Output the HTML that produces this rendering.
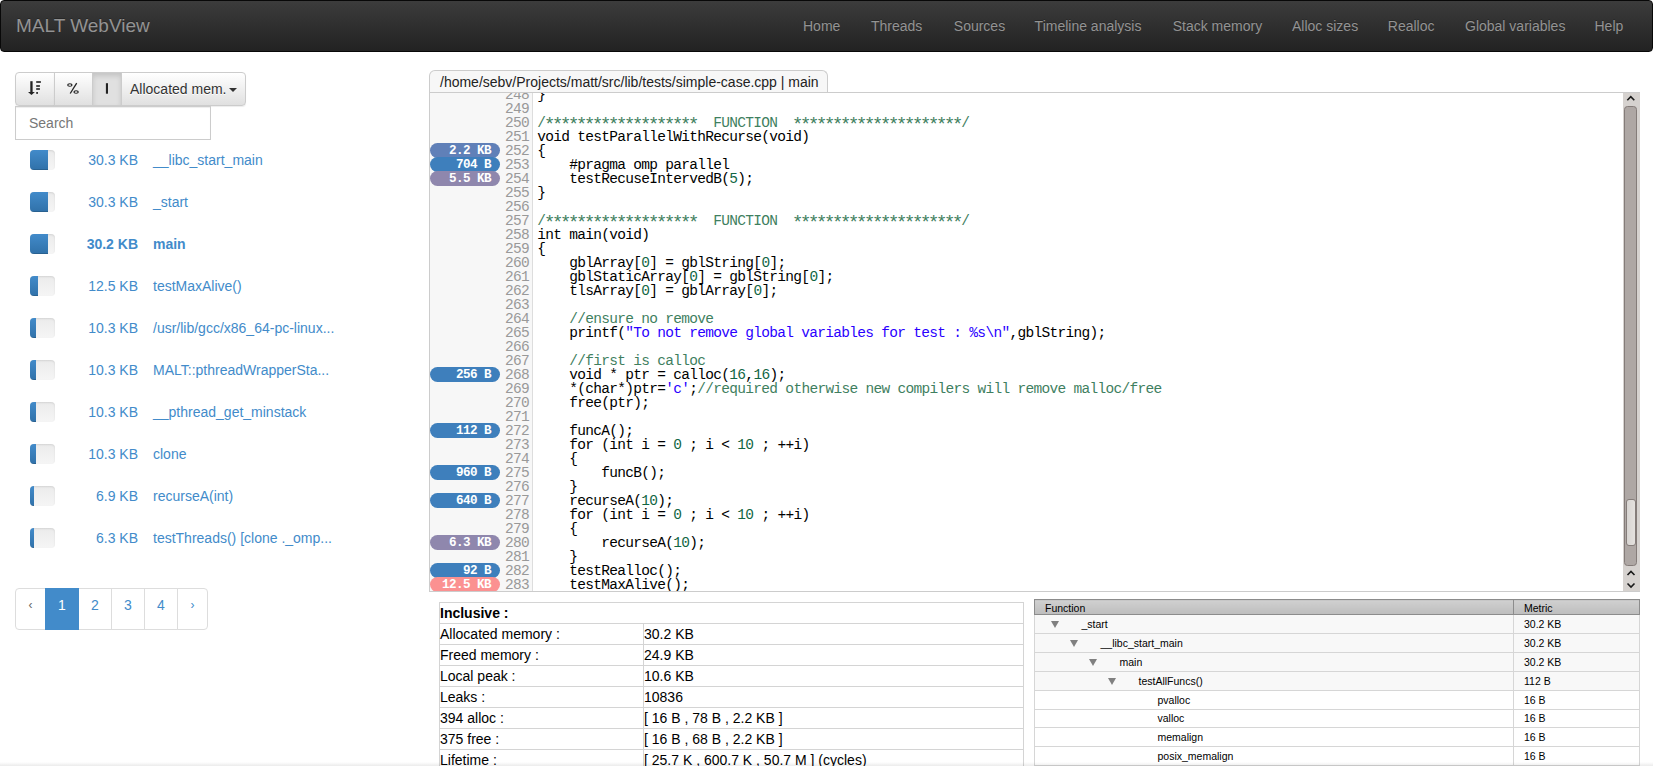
<!DOCTYPE html>
<html><head><meta charset="utf-8"><title>MALT WebView</title>
<style>
*{box-sizing:border-box;}
html,body{margin:0;padding:0;}
body{width:1653px;height:766px;overflow:hidden;position:relative;background:#fff;font-family:"Liberation Sans",sans-serif;font-size:14px;line-height:20px;color:#333;}
.abs{position:absolute;}
/* navbar */
#nav{left:0;top:0;width:1653px;height:52px;border:1px solid #080808;border-radius:4px;background:linear-gradient(to bottom,#3c3c3c 0,#222 100%);}
#brand{left:15px;top:15px;font-size:19px;line-height:20px;color:#939393;text-shadow:0 -1px 0 rgba(0,0,0,.25);white-space:nowrap;}
#links a{position:absolute;top:15px;line-height:20px;color:#939393;text-decoration:none;text-shadow:0 -1px 0 rgba(0,0,0,.25);white-space:nowrap;}
/* left */
.btn{position:absolute;top:72px;height:34px;border:1px solid #ccc;background:linear-gradient(to bottom,#fff 0,#e0e0e0 100%);color:#333;text-shadow:0 1px 0 #fff;box-shadow:inset 0 1px 0 rgba(255,255,255,.15),0 1px 1px rgba(0,0,0,.075);}

.btn{position:absolute;top:72px;height:34px;border:1px solid #ccc;background:linear-gradient(to bottom,#fff 0,#e0e0e0 100%);color:#333;box-shadow:inset 0 1px 0 rgba(255,255,255,.15),0 1px 1px rgba(0,0,0,.075);}
.btn.act{background:#e0e0e0;border-color:#ccc;box-shadow:inset 0 3px 5px rgba(0,0,0,.125);}
#search{left:15px;top:106px;width:196px;height:34px;border:1px solid #ccc;box-shadow:inset 0 1px 1px rgba(0,0,0,.075);background:#fff;}
#search span{position:absolute;left:13px;top:6px;color:#777;}
.row{position:absolute;left:0;width:400px;height:20px;}
.prog{position:absolute;left:30px;top:0;width:25px;height:20px;border-radius:4px;background:linear-gradient(to bottom,#ebebeb 0,#f5f5f5 100%);box-shadow:inset 0 1px 2px rgba(0,0,0,.1);overflow:hidden;}
.prog i{position:absolute;left:0;top:0;height:20px;background:linear-gradient(to bottom,#428bca 0,#3071a9 100%);box-shadow:inset 0 -1px 0 rgba(0,0,0,.15);}
.row .v{position:absolute;right:262px;top:0;color:#428bca;white-space:nowrap;}
.row .n{position:absolute;left:153px;top:0;color:#428bca;white-space:nowrap;}
.row.b .v,.row.b .n{font-weight:bold;}
#pag{left:15px;top:588px;height:42px;}
#pag a{position:absolute;top:0;height:42px;border:1px solid #ddd;color:#428bca;text-align:center;line-height:20px;padding-top:6px;background:#fff;}
#pag a.ar{font-size:12px;}
#pag a.dis{color:#666;}

#tab{left:429px;top:70px;width:399px;height:23px;border:1px solid #ccc;border-bottom:none;border-radius:6px 6px 0 0;background:#f7f7f7;}
#tab span{position:absolute;left:10px;top:0.5px;white-space:nowrap;color:#222;}
#ed{left:429px;top:92px;width:1211px;height:500px;border:1px solid #ccc;background:#fff;overflow:hidden;}
#gut{position:absolute;left:0;top:0;width:103px;height:498px;background:#f7f7f7;border-right:1px solid #ddd;}
#code{position:absolute;left:0;top:-5px;width:1193px;font-family:"Liberation Mono",monospace;font-size:14.5px;letter-spacing:-0.7px;line-height:14px;}
.ln{position:relative;height:14px;white-space:pre;}
.ln .num{position:absolute;left:0;width:99px;text-align:right;color:#999;}
.ln .txt{position:absolute;left:107.3px;color:#000;}
.bd{position:absolute;left:0;top:-1px;width:70px;height:15px;border-radius:7.5px;color:#fff;font-weight:bold;font-size:12.6px;letter-spacing:-0.55px;line-height:15px;padding-top:1px;text-align:right;padding-right:9px;}
.c{color:#3f7f5f;} .c i{font-style:normal;display:inline-block;width:8px;transform:translate(0.2px,1.8px) scale(1.3,1.25);} .s{color:#2a00ff;} .m{color:#116644;}


#sb{left:1623px;top:93px;width:17px;height:498px;background:#d6d2cf;}
#sb .tr{position:absolute;left:1px;top:13px;width:13px;height:460px;border-radius:3.5px;background:#aea7a4;border:1px solid #847c79;}
#sb .th{position:absolute;left:2.5px;top:406px;width:10px;height:47px;border-radius:3px;background:linear-gradient(to right,#d8d5d2,#e4e1de);border:1px solid #857d7a;}
.tbl{position:absolute;border-collapse:collapse;}
#info{left:439px;top:602px;width:585px;}
#info td{border:1px solid #d4d4d4;height:21px;padding:0;line-height:20px;color:#000;white-space:nowrap;}
#tree{left:1034px;top:599px;width:606px;font-size:10.5px;}
#tree th{height:15px;background:linear-gradient(to bottom,#d0d0d0,#bdbdbd);border:1px solid #8c8c8c;text-align:left;font-weight:normal;padding:0 0 0 10px;line-height:14px;color:#000;}
#tree th span{position:relative;top:1px;}
#tree td{height:19px;overflow:hidden;border:1px solid #d6d6d6;padding:0 0 0 10px;line-height:18px;color:#000;white-space:nowrap;}
#tree tr.p td{background:#f8f8f8;}
#tree tr.s td{height:18px;line-height:17px;}
.tri{display:inline-block;width:0;height:0;border-left:4.75px solid transparent;border-right:4.75px solid transparent;border-top:7.5px solid #808080;vertical-align:0px;margin-left:5.5px;margin-right:23px;}
#shade{left:0;top:762px;width:1653px;height:4px;background:linear-gradient(to bottom,rgba(0,0,0,0),rgba(0,0,0,.08));}
</style></head>
<body>
<div id="nav" class="abs">
  <div id="brand" class="abs">MALT WebView</div>
  <div id="links"><a style="left:802px">Home</a><a style="left:870px">Threads</a><a style="left:952.8px">Sources</a><a style="left:1033.6px">Timeline analysis</a><a style="left:1171.7px">Stack memory</a><a style="left:1291px">Alloc sizes</a><a style="left:1386.8px">Realloc</a><a style="left:1464px">Global variables</a><a style="left:1593.5px">Help</a></div>
</div>

<div class="btn" style="left:15px;width:40px;border-radius:4px 0 0 4px;">
 <svg class="abs" style="left:-1px;top:-1px" width="40" height="34" viewBox="15 72 40 34">
  <g fill="#222">
   <rect x="30.3" y="81.2" width="2.3" height="11"/>
   <polygon points="28,92 34.9,92 31.45,95"/>
   <rect x="36.2" y="81.2" width="4.7" height="1.6"/>
   <rect x="36.2" y="85.2" width="3.7" height="1.6"/>
   <rect x="36.2" y="88.2" width="3.7" height="1.6"/>
   <rect x="36.2" y="92.1" width="1.8" height="1.7"/>
  </g>
 </svg>
</div>
<div class="btn" style="left:54px;width:39px;">
 <svg class="abs" style="left:-1px;top:-1px" width="39" height="34" viewBox="54 72 39 34">
  <g fill="#222"><path fill-rule="evenodd" d="M67.1,85 a2.75,1.8 0 1,0 5.5,0 a2.75,1.8 0 1,0 -5.5,0 Z M68.4,85 a1.45,0.85 0 1,0 2.9,0 a1.45,0.85 0 1,0 -2.9,0 Z"/><path fill-rule="evenodd" d="M73.35,92 a2.75,1.8 0 1,0 5.5,0 a2.75,1.8 0 1,0 -5.5,0 Z M74.65,92 a1.45,0.85 0 1,0 2.9,0 a1.45,0.85 0 1,0 -2.9,0 Z"/></g><line x1="76.7" y1="83.2" x2="70.2" y2="93.5" stroke="#222" stroke-width="1.3"/>
 </svg>
</div>
<div class="btn act" style="left:92px;width:30px;">
 <svg class="abs" style="left:-1px;top:-1px" width="30" height="34" viewBox="92 72 30 34">
  <rect x="105.9" y="83.2" width="2.1" height="10.5" fill="#222"/>
 </svg>
</div>
<div class="btn" style="left:121px;width:125px;border-radius:0 4px 4px 0;">
 <span class="abs" style="left:8px;top:6px;white-space:nowrap;">Allocated mem.</span>
 <span class="abs" style="left:107px;top:15px;width:0;height:0;border-top:4px solid #333;border-left:4px solid transparent;border-right:4px solid transparent;"></span>
</div>
<div id="search" class="abs"><span>Search</span></div>
<div class="row" style="top:150px"><div class="prog"><i style="width:18px"></i></div><span class="v">30.3 KB</span><span class="n">__libc_start_main</span></div>
<div class="row" style="top:192px"><div class="prog"><i style="width:18px"></i></div><span class="v">30.3 KB</span><span class="n">_start</span></div>
<div class="row b" style="top:234px"><div class="prog"><i style="width:18px"></i></div><span class="v">30.2 KB</span><span class="n">main</span></div>
<div class="row" style="top:276px"><div class="prog"><i style="width:8px"></i></div><span class="v">12.5 KB</span><span class="n">testMaxAlive()</span></div>
<div class="row" style="top:318px"><div class="prog"><i style="width:6px"></i></div><span class="v">10.3 KB</span><span class="n">/usr/lib/gcc/x86_64-pc-linux...</span></div>
<div class="row" style="top:360px"><div class="prog"><i style="width:6px"></i></div><span class="v">10.3 KB</span><span class="n">MALT::pthreadWrapperSta...</span></div>
<div class="row" style="top:402px"><div class="prog"><i style="width:6px"></i></div><span class="v">10.3 KB</span><span class="n">__pthread_get_minstack</span></div>
<div class="row" style="top:444px"><div class="prog"><i style="width:6px"></i></div><span class="v">10.3 KB</span><span class="n">clone</span></div>
<div class="row" style="top:486px"><div class="prog"><i style="width:4px"></i></div><span class="v">6.9 KB</span><span class="n">recurseA(int)</span></div>
<div class="row" style="top:528px"><div class="prog"><i style="width:4px"></i></div><span class="v">6.3 KB</span><span class="n">testThreads() [clone ._omp...</span></div>
<div id="pag" class="abs"><a class="ar dis" style="left:0px;width:31px;border-radius:4px 0 0 4px;">&lsaquo;</a><a style="left:30px;width:34px;background:#428bca;border-color:#428bca;color:#fff;z-index:2;">1</a><a style="left:63px;width:34px;">2</a><a style="left:96px;width:34px;">3</a><a style="left:129px;width:34px;">4</a><a class="ar" style="left:162px;width:31px;border-radius:0 4px 4px 0;">&rsaquo;</a></div>
<div id="tab" class="abs"><span>/home/sebv/Projects/matt/src/lib/tests/simple-case.cpp | main</span></div>
<div id="ed" class="abs"><div id="gut"></div><div id="code">
<div class="ln"><span class="num">248</span><span class="txt">}</span></div>
<div class="ln"><span class="num">249</span><span class="txt"></span></div>
<div class="ln"><span class="num">250</span><span class="txt"><span class="c">/<i>*</i><i>*</i><i>*</i><i>*</i><i>*</i><i>*</i><i>*</i><i>*</i><i>*</i><i>*</i><i>*</i><i>*</i><i>*</i><i>*</i><i>*</i><i>*</i><i>*</i><i>*</i><i>*</i>  FUNCTION  <i>*</i><i>*</i><i>*</i><i>*</i><i>*</i><i>*</i><i>*</i><i>*</i><i>*</i><i>*</i><i>*</i><i>*</i><i>*</i><i>*</i><i>*</i><i>*</i><i>*</i><i>*</i><i>*</i><i>*</i><i>*</i>/</span></span></div>
<div class="ln"><span class="num">251</span><span class="txt">void testParallelWithRecurse(void)</span></div>
<div class="ln"><span class="bd" style="background:#6080b8">2.2 KB</span><span class="num">252</span><span class="txt">{</span></div>
<div class="ln"><span class="bd" style="background:#3e7fbc">704 B</span><span class="num">253</span><span class="txt">    #pragma omp parallel</span></div>
<div class="ln"><span class="bd" style="background:#8f87ad">5.5 KB</span><span class="num">254</span><span class="txt">    testRecuseIntervedB(<span class="m">5</span>);</span></div>
<div class="ln"><span class="num">255</span><span class="txt">}</span></div>
<div class="ln"><span class="num">256</span><span class="txt"></span></div>
<div class="ln"><span class="num">257</span><span class="txt"><span class="c">/<i>*</i><i>*</i><i>*</i><i>*</i><i>*</i><i>*</i><i>*</i><i>*</i><i>*</i><i>*</i><i>*</i><i>*</i><i>*</i><i>*</i><i>*</i><i>*</i><i>*</i><i>*</i><i>*</i>  FUNCTION  <i>*</i><i>*</i><i>*</i><i>*</i><i>*</i><i>*</i><i>*</i><i>*</i><i>*</i><i>*</i><i>*</i><i>*</i><i>*</i><i>*</i><i>*</i><i>*</i><i>*</i><i>*</i><i>*</i><i>*</i><i>*</i>/</span></span></div>
<div class="ln"><span class="num">258</span><span class="txt">int main(void)</span></div>
<div class="ln"><span class="num">259</span><span class="txt">{</span></div>
<div class="ln"><span class="num">260</span><span class="txt">    gblArray[<span class="m">0</span>] = gblString[<span class="m">0</span>];</span></div>
<div class="ln"><span class="num">261</span><span class="txt">    gblStaticArray[<span class="m">0</span>] = gblString[<span class="m">0</span>];</span></div>
<div class="ln"><span class="num">262</span><span class="txt">    tlsArray[<span class="m">0</span>] = gblArray[<span class="m">0</span>];</span></div>
<div class="ln"><span class="num">263</span><span class="txt"></span></div>
<div class="ln"><span class="num">264</span><span class="txt">    <span class="c">//ensure no remove</span></span></div>
<div class="ln"><span class="num">265</span><span class="txt">    printf(<span class="s">"To not remove global variables for test : %s\n"</span>,gblString);</span></div>
<div class="ln"><span class="num">266</span><span class="txt"></span></div>
<div class="ln"><span class="num">267</span><span class="txt">    <span class="c">//first is calloc</span></span></div>
<div class="ln"><span class="bd" style="background:#3e7fbc">256 B</span><span class="num">268</span><span class="txt">    void * ptr = calloc(<span class="m">16</span>,<span class="m">16</span>);</span></div>
<div class="ln"><span class="num">269</span><span class="txt">    *(char*)ptr=<span class="s">'c'</span>;<span class="c">//required otherwise new compilers will remove malloc/free</span></span></div>
<div class="ln"><span class="num">270</span><span class="txt">    free(ptr);</span></div>
<div class="ln"><span class="num">271</span><span class="txt"></span></div>
<div class="ln"><span class="bd" style="background:#3e7fbc">112 B</span><span class="num">272</span><span class="txt">    funcA();</span></div>
<div class="ln"><span class="num">273</span><span class="txt">    for (int i = <span class="m">0</span> ; i &lt; <span class="m">10</span> ; ++i)</span></div>
<div class="ln"><span class="num">274</span><span class="txt">    {</span></div>
<div class="ln"><span class="bd" style="background:#3e7fbc">960 B</span><span class="num">275</span><span class="txt">        funcB();</span></div>
<div class="ln"><span class="num">276</span><span class="txt">    }</span></div>
<div class="ln"><span class="bd" style="background:#3e7fbc">640 B</span><span class="num">277</span><span class="txt">    recurseA(<span class="m">10</span>);</span></div>
<div class="ln"><span class="num">278</span><span class="txt">    for (int i = <span class="m">0</span> ; i &lt; <span class="m">10</span> ; ++i)</span></div>
<div class="ln"><span class="num">279</span><span class="txt">    {</span></div>
<div class="ln"><span class="bd" style="background:#8f87ad">6.3 KB</span><span class="num">280</span><span class="txt">        recurseA(<span class="m">10</span>);</span></div>
<div class="ln"><span class="num">281</span><span class="txt">    }</span></div>
<div class="ln"><span class="bd" style="background:#3e7fbc">92 B</span><span class="num">282</span><span class="txt">    testRealloc();</span></div>
<div class="ln"><span class="bd" style="background:#fb9191">12.5 KB</span><span class="num">283</span><span class="txt">    testMaxAlive();</span></div>
<div class="ln"><span class="num">284</span><span class="txt"></span></div>
</div></div>
<div id="sb" class="abs">
 <svg class="abs" style="left:0;top:0" width="17" height="498" viewBox="0 0 17 498">
  <polyline points="4.3,7.2 7.8,3.7 11.3,7.2" fill="none" stroke="#1a1a1a" stroke-width="1.6"/>
  <polyline points="4.5,482 8,478.5 11.5,482" fill="none" stroke="#1a1a1a" stroke-width="1.6"/>
  <polyline points="4.5,490.5 8,494 11.5,490.5" fill="none" stroke="#1a1a1a" stroke-width="1.6"/>
 </svg>
 <div class="tr"></div><div class="th"></div>
</div>
<table id="info" class="tbl"><tr><td colspan="2"><b>Inclusive :</b></td></tr><tr><td style="width:204px">Allocated memory :</td><td>30.2 KB</td></tr><tr><td style="width:204px">Freed memory :</td><td>24.9 KB</td></tr><tr><td style="width:204px">Local peak :</td><td>10.6 KB</td></tr><tr><td style="width:204px">Leaks :</td><td>10836</td></tr><tr><td style="width:204px">394 alloc :</td><td>[ 16 B , 78 B , 2.2 KB ]</td></tr><tr><td style="width:204px">375 free :</td><td>[ 16 B , 68 B , 2.2 KB ]</td></tr><tr><td style="width:204px">Lifetime :</td><td>[ 25.7 K , 600.7 K , 50.7 M ] (cycles)</td></tr></table>
<table id="tree" class="tbl"><tr><th style="width:479px"><span>Function</span></th><th><span>Metric</span></th></tr><tr class="p"><td><span style="display:inline-block;width:0px"></span><span class="tri"></span>_start</td><td>30.2 KB</td></tr><tr class="p"><td><span style="display:inline-block;width:19px"></span><span class="tri"></span>__libc_start_main</td><td>30.2 KB</td></tr><tr class="p"><td><span style="display:inline-block;width:38px"></span><span class="tri"></span>main</td><td>30.2 KB</td></tr><tr class="p"><td><span style="display:inline-block;width:57px"></span><span class="tri"></span>testAllFuncs()</td><td>112 B</td></tr><tr class=""><td><span style="display:inline-block;width:76px"></span><span style="display:inline-block;width:36.5px"></span>pvalloc</td><td>16 B</td></tr><tr class="s"><td><span style="display:inline-block;width:76px"></span><span style="display:inline-block;width:36.5px"></span>valloc</td><td>16 B</td></tr><tr class=""><td><span style="display:inline-block;width:76px"></span><span style="display:inline-block;width:36.5px"></span>memalign</td><td>16 B</td></tr><tr class=""><td><span style="display:inline-block;width:76px"></span><span style="display:inline-block;width:36.5px"></span>posix_memalign</td><td>16 B</td></tr></table>
<div id="shade" class="abs"></div>
</body></html>
